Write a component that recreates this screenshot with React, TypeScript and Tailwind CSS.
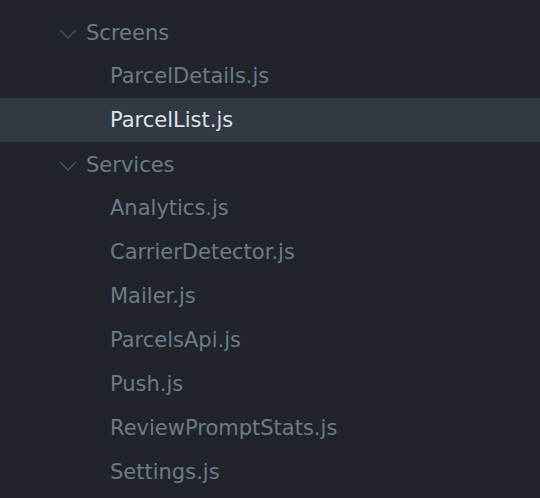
const TREE = [
  {
    name: 'Screens',
    files: ['ParcelDetails.js', 'ParcelList.js'],
  },
  {
    name: 'Services',
    files: [
      'Analytics.js',
      'CarrierDetector.js',
      'Mailer.js',
      'ParcelsApi.js',
      'Push.js',
      'ReviewPromptStats.js',
      'Settings.js',
    ],
  },
]

const SELECTED = 'ParcelList.js'

function Chevron() {
  return (
    <svg width="18" height="10" viewBox="0 0 18 10" className="flex-shrink-0">
      <path d="M1 1 L9 9 L17 1" fill="none" stroke="#4b5462" strokeWidth="1.4" />
    </svg>
  )
}

export default function App() {
  return (
    <div
      className="w-[540px] h-[498px] overflow-hidden bg-[#21252b] pt-[10px] text-[21px] text-[#6d7b89]"
      style={{ fontFamily: '"DejaVu Sans", "Open Sans", sans-serif' }}
    >
      {TREE.map((dir) => (
        <div key={dir.name}>
          <div className="h-[44px] flex items-center pt-[3px] pl-[59px] gap-[9px]">
            <Chevron />
            <span>{dir.name}</span>
          </div>
          {dir.files.map((f) => (
            <div
              key={f}
              className={
                f === SELECTED
                  ? 'h-[44px] flex items-center pt-[2px] pl-[110px] bg-[#323943] text-[#dce2ea]'
                  : 'h-[44px] flex items-center pt-[2px] pl-[110px]'
              }
            >
              {f}
            </div>
          ))}
        </div>
      ))}
    </div>
  )
}
